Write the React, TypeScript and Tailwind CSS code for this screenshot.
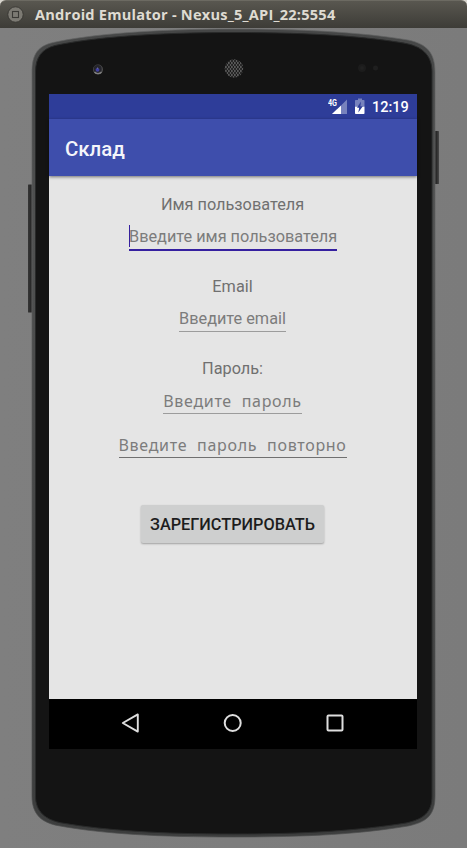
import React from 'react';

const OUTER =
  'M32 72C32 54 38 46 53 42.500C90 34.500 150 29 234 29C318 29 372 34 408 40C428 44 435 54 435 72V796C435 815 427 822 408 826C360 834 310 837 234 837C158 837 105 834 60 826C42 823 32 815 32 796Z';
const INNER =
  'M35.5 72C35.5 57 42 49 55 45.500C92 37.500 152 32.5 234 32.5C316 32.5 370 37 406 43.5C424 47 432 57 432 72V796C432 812 424 819 406 823C358 830.5 308 834 234 834C158 834 107 830.5 62 823C46 820 35.5 812 35.5 796Z';

function PhoneBody() {
  return (
    <svg className="absolute left-0 top-0" width="467" height="848" viewBox="0 0 467 848">
      <defs>
        <linearGradient id="side" x1="0" x2="1">
          <stop offset="0" stopColor="#363636" />
          <stop offset="0.5" stopColor="#2a2a2a" />
          <stop offset="1" stopColor="#484848" />
        </linearGradient>
        <linearGradient id="rim" x1="0" y1="0" x2="0" y2="1">
          <stop offset="0" stopColor="#454646" />
          <stop offset="0.25" stopColor="#505151" />
          <stop offset="1" stopColor="#3c3d3d" />
        </linearGradient>
        <linearGradient id="edge" x1="0" y1="0" x2="0" y2="1">
          <stop offset="0" stopColor="#636464" />
          <stop offset="0.3" stopColor="#5c5d5d" />
          <stop offset="1" stopColor="#4c4d4d" />
        </linearGradient>
        <linearGradient id="wall" x1="0" x2="1">
          <stop offset="0" stopColor="#7f7f7f" />
          <stop offset="1" stopColor="#7b7b7b" />
        </linearGradient>
        <pattern id="mesh" width="3" height="4" patternUnits="userSpaceOnUse">
          <rect width="3" height="4" fill="#595959" />
          <circle cx="1" cy="1" r="1" fill="#171717" />
          <circle cx="2.5" cy="3" r="1" fill="#171717" />
        </pattern>
      </defs>
      <rect width="467" height="848" fill="url(#wall)" />
      <rect x="28" y="184.500" width="5" height="128" rx="0.5" fill="url(#side)" />
      <rect x="434" y="131" width="5" height="53" rx="0.5" fill="url(#side)" />
      <path d={OUTER} fill="url(#rim)" />
      <path d={OUTER} fill="none" stroke="url(#edge)" strokeWidth="0.7" />
      <path d={INNER} fill="#141414" stroke="#292a2a" strokeWidth="1" />
      <circle cx="98" cy="69.500" r="5" fill="#4c4c4c" />
      <circle cx="97.700" cy="69" r="4" fill="#24242b" />
      <circle cx="97.500" cy="69.800" r="1.900" fill="#4040a4" />
      <path d="M94.500 72a4.500 4.500 0 0 0 7 0" fill="none" stroke="#808080" strokeWidth="1.300" />
      <circle cx="97.600" cy="68" r="0.600" fill="#9292b5" />
      <circle cx="234" cy="68.500" r="9.300" fill="url(#mesh)" />
      <circle cx="362" cy="68" r="4" fill="#1c1c1c" />
      <circle cx="362" cy="68" r="2" fill="#212121" />
      <circle cx="375.500" cy="68" r="2.500" fill="#1f1f1f" />
    </svg>
  );
}

function StatusBar() {
  return (
    <div className="flex h-[25px] items-center bg-[#2e3d99] pl-[279px] text-white">
      <svg width="20" height="19" viewBox="0 0 20 19">
        <path d="M19 2.500V17H4L8.500 12.500H13V8.500Z" fill="#7782bd" />
        <path d="M13 8.500V17H4Z" fill="#fff" />
        <text x="0" y="8.800" fontFamily="Roboto" fontWeight="700" fontSize="9" textLength="9" lengthAdjust="spacingAndGlyphs" fill="#fff">4G</text>
      </svg>
      <svg className="ml-[7px]" width="10" height="17" viewBox="0 0 10 17">
        <path d="M3 .5h4v1.500h1.700q.8 0 .8.800V9H0V2.800q0-.8.800-.8H3Z" fill="#7782bd" />
        <path d="M0 8.700h9.500v6.500q0 .8-.8.800H.8q-.8 0-.8-.8Z" fill="#fff" />
        <path d="M6 3.500L2 9.800H4.200L3.300 14.500L7.800 8.200H5.400Z" fill="#2e3d99" />
      </svg>
      <span className="ml-[7px] whitespace-nowrap pt-[2px] text-[14.5px] leading-[25px] font-medium">12:19</span>
    </div>
  );
}

function Field({ text, width, className }: { text: string; width: string; className: string }) {
  return <div className={`${width} ${className} flex justify-center whitespace-pre`}>{text}</div>;
}

function NavBar() {
  return (
    <div className="flex h-[50px] items-center gap-[78px] bg-black pb-[2px] pl-[70px]">
      <svg width="24" height="24" viewBox="0 0 24 24" fill="none" stroke="#dedede" strokeWidth="1.900" strokeLinejoin="round">
        <path d="M3.800 12L18.800 3.400V20.600Z" />
      </svg>
      <svg width="24" height="24" viewBox="0 0 24 24" fill="none" stroke="#dedede" strokeWidth="2">
        <circle cx="11.700" cy="12" r="8" />
      </svg>
      <svg width="24" height="24" viewBox="0 0 24 24" fill="none" stroke="#dedede" strokeWidth="2">
        <rect x="4.500" y="4.500" width="15" height="15" rx="1" />
      </svg>
    </div>
  );
}

export default function App() {
  return (
    <div className="relative h-[848px] w-[467px] overflow-hidden bg-[#7d7d7d] font-[Roboto,'Noto_Sans',sans-serif]">
      <PhoneBody />
      <div className="relative">
        <div className="bg-[#d8d5ce]">
          <header className="flex h-7 items-center rounded-t-[6px] border-t border-[#6c6a62] bg-gradient-to-b from-[#595750] to-[#3d3c37] pl-[7px]">
            <svg width="17" height="17" viewBox="0 0 17 17">
              <circle cx="8.500" cy="8.500" r="7.700" fill="#7c7a73" stroke="#33322e" strokeWidth="0.800" />
              <rect x="5.500" y="5.500" width="6" height="6" fill="none" stroke="#3b3a36" strokeWidth="1.100" />
            </svg>
            <h1 className="ml-[11px] whitespace-nowrap pb-[2px] font-['Open_Sans',sans-serif] text-[14.6px] leading-[26px] font-bold tracking-[0.22px] text-[#dfdbd2]">Android Emulator - Nexus_5_API_22:5554</h1>
          </header>
        </div>
        <div className="ml-[49px] mt-[66px] flex h-[655px] w-[368px] flex-col bg-[#e5e5e5]">
          <StatusBar />
          <div className="z-10 flex h-[57px] items-center bg-[#3e4eac] pt-[3px] pl-4 shadow-[0_1px_3px_rgba(0,0,0,0.5)]">
            <h2 className="text-[20.4px] font-medium text-[#f4f5fa]">Склад</h2>
          </div>
          <main className="flex min-h-0 flex-1 flex-col items-center pr-[1px] text-[16.3px] leading-[20px] text-[#707070]">
            <div className="mt-[19px] h-5 whitespace-nowrap">Имя пользователя</div>
            <div className="mt-[10px] flex h-[26px] w-[208px] border-b-2 border-[#3520a0]">
              <span className="h-[22px] w-[1.5px] shrink-0 bg-[#3520a0]" />
              <span className="mt-[2px] -ml-px whitespace-nowrap text-[#7c7c7c]">Введите имя пользователя</span>
            </div>
            <div className="mt-[26px] h-5">Email</div>
            <Field text="Введите email" width="w-[107px]" className="mt-[12px] h-[23px] border-b border-[#9c9c9c] text-[#7c7c7c]" />
            <div className="mt-[27px] h-5">Пароль:</div>
            <Field text="Введите пароль" width="w-[139px]" className="mt-[12px] h-[23px] border-b border-[#9c9c9c] font-['Noto_Sans',sans-serif] text-[16px] tracking-[0.68px] [word-spacing:5px] text-[#7c7c7c]" />
            <Field text="Введите пароль повторно" width="w-[228px]" className="mt-[21px] h-[23px] border-b border-[#707070] font-['Noto_Sans',sans-serif] text-[16px] tracking-[0.7px] [word-spacing:5px] text-[#7c7c7c]" />
            <button className="mt-[47px] h-[38px] w-[183px] rounded-[2px] bg-[#cecfcf] pt-px text-[16.3px] font-medium text-[#1d1d1d] shadow-[0_1px_2px_rgba(0,0,0,0.3)]">ЗАРЕГИСТРИРОВАТЬ</button>
          </main>
          <NavBar />
        </div>
      </div>
    </div>
  );
}
